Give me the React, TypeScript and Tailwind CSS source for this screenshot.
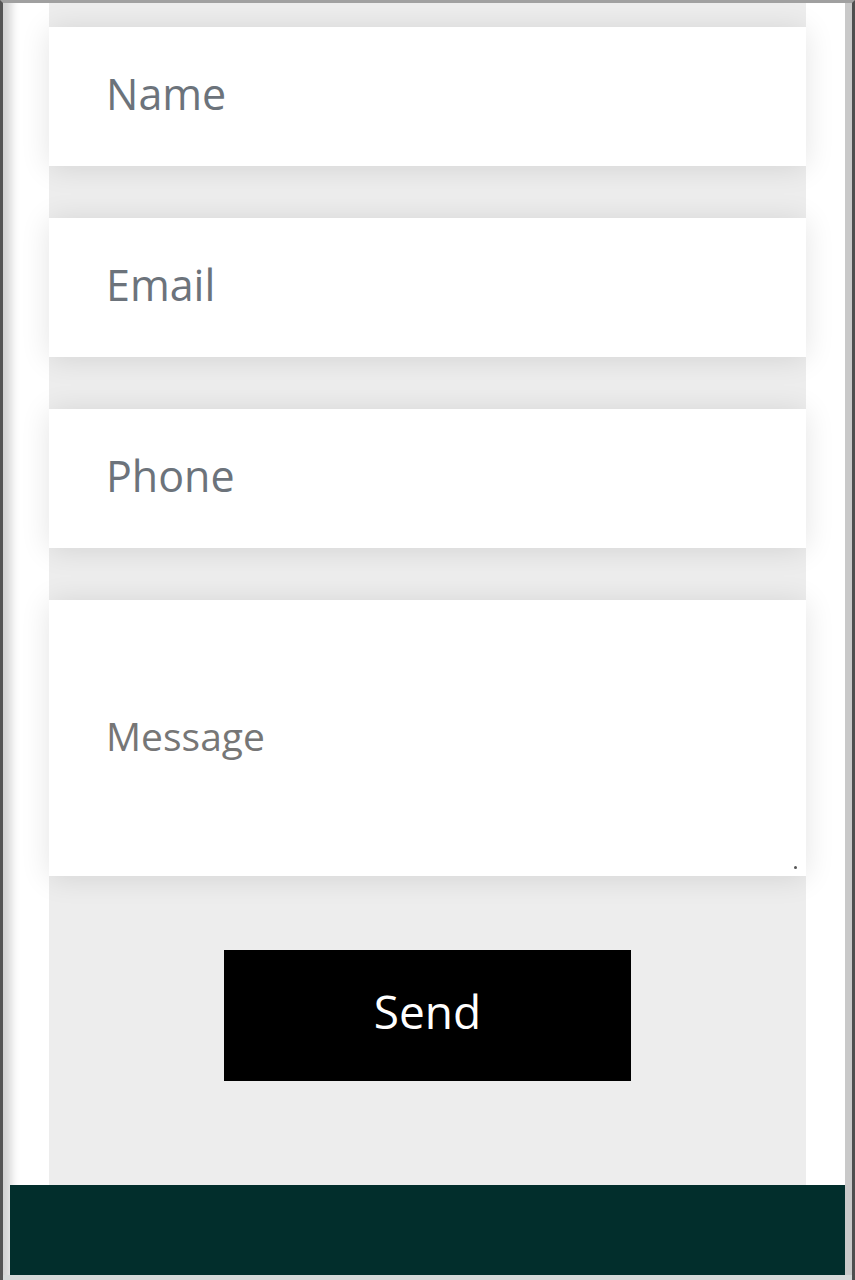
import { useState } from 'react'

const fieldClass =
  'block h-[139px] w-full bg-white pb-[7px] pl-[57px] pr-6 text-[43px] text-[#495057] placeholder:text-[#6c737b] outline-none shadow-[0_2px_28px_rgba(0,0,0,0.11)]'

export default function App() {
  const [form, setForm] = useState({ name: '', email: '', phone: '', message: '' })

  const update = (key: keyof typeof form) => (e: { target: { value: string } }) =>
    setForm({ ...form, [key]: e.target.value })

  return (
    <div className="flex h-[1280px] w-[855px] flex-col overflow-hidden border-l-[3px] border-r-[3px] border-t-[3px] border-l-[#555555] border-r-[#4f4f4f] border-t-[#a0a0a0] bg-[#d6d9d9] font-['Open_Sans',sans-serif]">
      <div className="flex flex-1 flex-col border-r-[7px] border-[#c9c9c9] bg-white shadow-[inset_16px_0_10px_-8px_rgba(0,0,0,0.18)]">
        {/* Contact form panel */}
        <section className="ml-[46px] w-[757px] flex-1 bg-[#ededed] pt-[24px]">
          <form className="flex flex-col gap-[52px]" onSubmit={(e) => e.preventDefault()}>
            <input
              type="text"
              placeholder="Name"
              value={form.name}
              onChange={update('name')}
              className={fieldClass}
            />
            <input
              type="email"
              placeholder="Email"
              value={form.email}
              onChange={update('email')}
              className={fieldClass}
            />
            <input
              type="tel"
              placeholder="Phone"
              value={form.phone}
              onChange={update('phone')}
              className={fieldClass}
            />
            <div className="relative">
              <textarea
                placeholder="Message"
                value={form.message}
                onChange={update('message')}
                className="block h-[276px] w-full resize-none bg-white pl-[57px] pr-6 pt-[109px] text-[39px] leading-[54px] text-[#495057] placeholder:text-[#767676] outline-none shadow-[0_2px_28px_rgba(0,0,0,0.11)]"
              />
              <span className="absolute bottom-[7px] right-[9px] h-[3px] w-[3px] rounded-full bg-[#555555]" />
            </div>
          </form>

          <div className="mt-[74px] flex justify-center">
            <button
              type="submit"
              className="h-[131px] w-[407px] bg-black pb-[8px] text-[46px] text-white"
            >
              Send
            </button>
          </div>
        </section>

        {/* Footer */}
        <footer className="ml-[7px] h-[90px] bg-[#022e2c]" />
      </div>
      <div className="h-[5px] bg-[#d6d9d9]" />
    </div>
  )
}
